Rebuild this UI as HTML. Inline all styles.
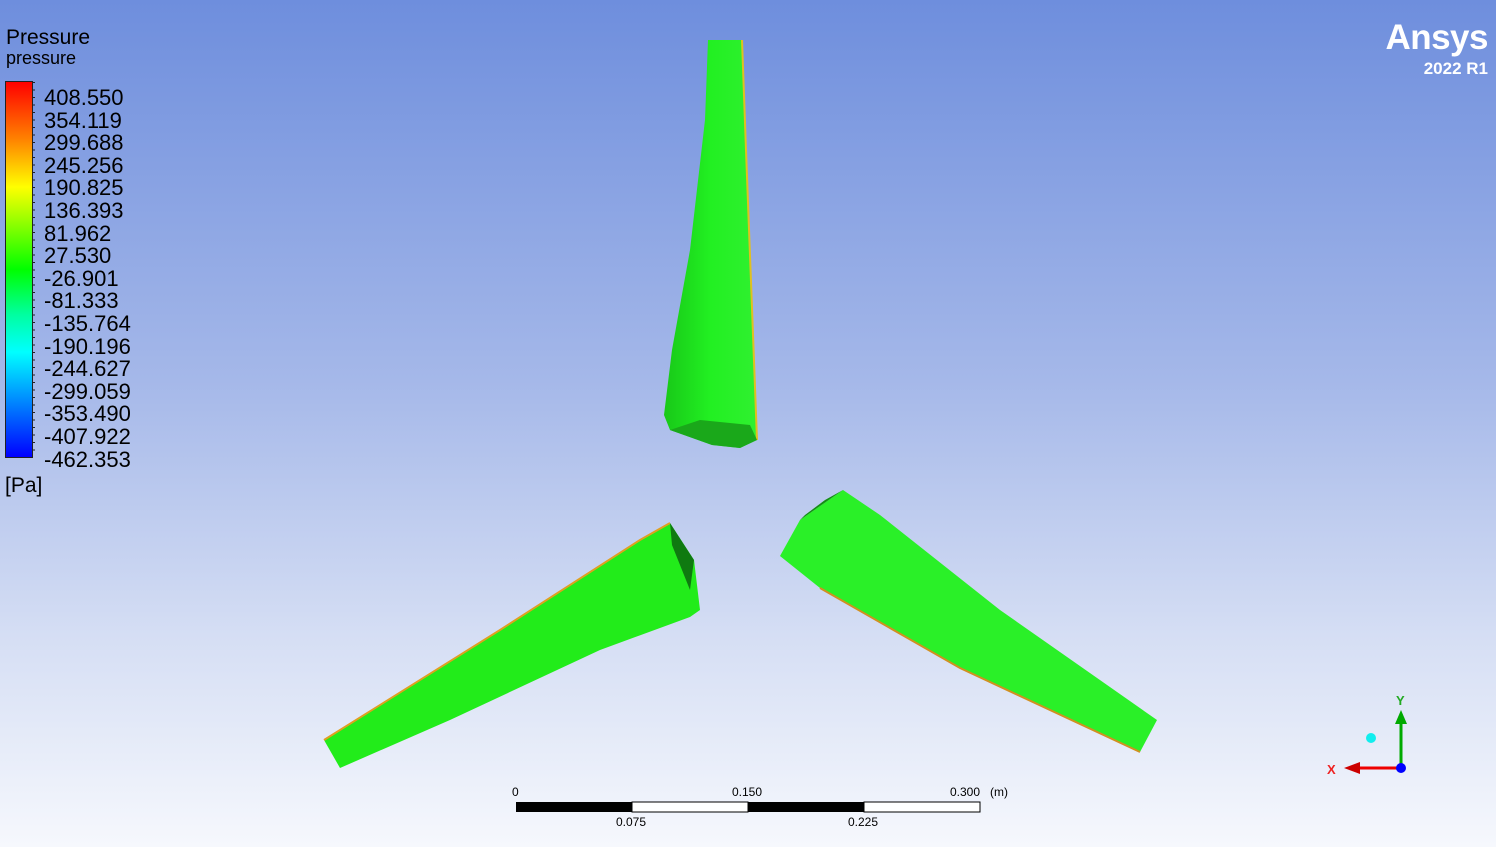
<!DOCTYPE html>
<html><head><meta charset="utf-8"><style>
body{margin:0;width:1496px;height:847px;overflow:hidden;font-family:"Liberation Sans",sans-serif;background:linear-gradient(#6e8edd 0%,#a5b8e9 45%,#d5def4 75%,#f6f8fd 100%);position:relative}
.t{position:absolute;color:#000}
.lab{position:absolute;left:44px;font-size:22px;line-height:22.6px;top:87px}
</style></head><body>
<div class="t" style="left:6px;top:26px;font-size:21px">Pressure</div>
<div class="t" style="left:6px;top:48px;font-size:18px">pressure</div>
<div style="position:absolute;left:5px;top:81px;width:26px;height:375px;border:1px solid #222;background:linear-gradient(#ff0000,#ff8000 15%,#ffff00 28%,#00ff00 50%,#00ffa0 62%,#00ffff 72%,#0080ff 86%,#0000ff)"></div>
<div style="position:absolute;left:32px;top:82px;width:3px;height:375px;background:repeating-linear-gradient(#222 0 1px,transparent 1px 7.5px)"></div>
<div class="lab">408.550<br>354.119<br>299.688<br>245.256<br>190.825<br>136.393<br>81.962<br>27.530<br>-26.901<br>-81.333<br>-135.764<br>-190.196<br>-244.627<br>-299.059<br>-353.490<br>-407.922<br>-462.353</div>
<div class="t" style="left:5px;top:474px;font-size:21px">[Pa]</div>
<div style="position:absolute;right:8px;top:18px;color:#fff;font-weight:bold;font-size:35px;letter-spacing:-0.5px">Ansys</div>
<div style="position:absolute;right:8px;top:59px;color:#fff;font-weight:bold;font-size:17px">2022 R1</div>
<svg width="1496" height="847" style="position:absolute;left:0;top:0">
<defs><linearGradient id="g1" x1="0" x2="1"><stop offset="0" stop-color="#18c818"/><stop offset=".5" stop-color="#22f022"/><stop offset="1" stop-color="#30f030"/></linearGradient></defs>
<polygon points="708,40 742,40 746,150 757,440 740,448 712,445 670,430 664,415 672,350 690,250 705,120" fill="url(#g1)"/>
<polyline points="742,40 746,150 757,440" stroke="#e0c020" stroke-width="2" fill="none"/>
<polygon points="670,430 712,445 740,448 757,440 750,425 700,420" fill="#1aa81a"/>
<polygon points="324,740 340,768 450,720 600,650 690,617 700,610 694,560 670,523 640,540 500,630" fill="#22ec1a"/>
<polyline points="324,740 500,630 640,540 670,523" stroke="#e0a020" stroke-width="2" fill="none"/>
<polygon points="670,523 694,560 690,590 672,545" fill="#0f7a10"/>
<polygon points="780,556 800,520 843,490 880,515 1000,610 1157,720 1140,752 960,668 820,588" fill="#2af028"/>
<polyline points="820,588 960,668 1140,752" stroke="#d09020" stroke-width="2" fill="none"/>
<polygon points="800,520 843,490 825,500 805,515" fill="#148e14"/>
<rect x="516" y="802" width="116" height="10" fill="#000"/><rect x="632" y="802" width="116" height="10" fill="#fff" stroke="#000"/>
<rect x="748" y="802" width="116" height="10" fill="#000"/><rect x="864" y="802" width="116" height="10" fill="#fff" stroke="#000"/>
<g font-family="Liberation Sans" font-size="12" fill="#000"><text x="512" y="796">0</text><text x="732" y="796">0.150</text><text x="950" y="796">0.300</text><text x="990" y="796">(m)</text><text x="616" y="826">0.075</text><text x="848" y="826">0.225</text></g>
<line x1="1401" y1="768" x2="1401" y2="722" stroke="#0a0" stroke-width="3"/><polygon points="1395,724 1407,724 1401,710" fill="#0a0"/>
<line x1="1401" y1="768" x2="1358" y2="768" stroke="#e00" stroke-width="3"/><polygon points="1360,762 1360,774 1344,768" fill="#c00"/>
<circle cx="1401" cy="768" r="5" fill="#00f"/><circle cx="1371" cy="738" r="5" fill="#1ee"/>
<text x="1396" y="705" fill="#2a2" font-size="13" font-weight="bold" font-family="Liberation Sans">Y</text>
<text x="1327" y="774" fill="#e22" font-size="13" font-weight="bold" font-family="Liberation Sans">X</text>
</svg>
</body></html>
